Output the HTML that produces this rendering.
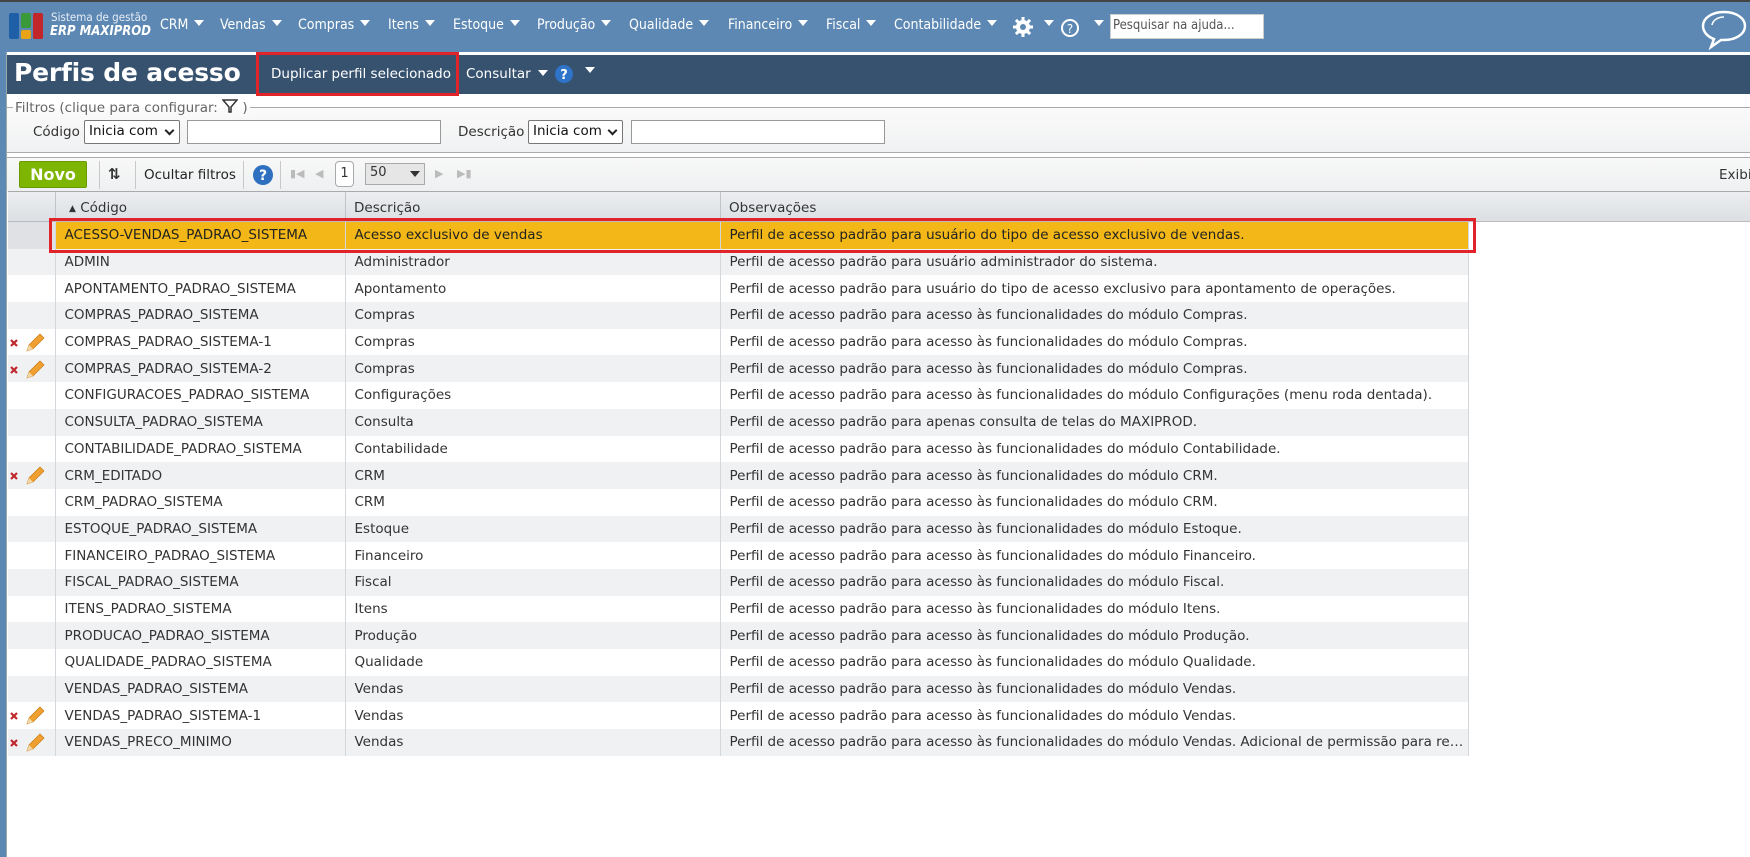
<!DOCTYPE html>
<html><head><meta charset="utf-8"><style>
*{margin:0;padding:0;box-sizing:border-box}
body{width:1750px;height:857px;overflow:hidden;background:#fff;font-family:"DejaVu Sans",Verdana,sans-serif;font-size:13px;color:#333;position:relative}
.abs{position:absolute}
#nav{left:0;top:0;width:1750px;height:52px;background:#5c88b3;border-top:2px solid #444}
.mi{position:absolute;top:15px;color:#fff;font-family:"DejaVu Sans Condensed","Liberation Sans",sans-serif;font-size:14px;white-space:nowrap}
.mi:after{content:"";display:inline-block;margin-left:6px;border-left:5px solid transparent;border-right:5px solid transparent;border-top:6px solid #fff;vertical-align:3px}
#leftbar{left:0;top:52px;width:7px;height:805px;background:#5c88b3;border-right:1px solid #9aa}
#title{left:7px;top:55px;width:1743px;height:39px;background:#36526f}
#filters{left:7px;top:107px;width:1743px;height:46px;border-top:1px solid #aaa;border-bottom:1px solid #aaa;background:linear-gradient(#fafafa,#f0f1f2)}
#tb{left:7px;top:157px;width:1743px;height:34px;border-top:1px solid #aaa;background:linear-gradient(#f8f8f8,#eef0f1)}
#hdr{left:8px;top:191px;width:1742px;height:31px;border-top:1px solid #aaa;border-bottom:1px solid #bbb;background:linear-gradient(#eceef0,#dcdfe3)}
.sep{position:absolute;top:3px;width:1px;height:28px;background:#c8c8c8}
table{position:absolute;left:8px;top:222px;border-collapse:collapse;width:1461px;table-layout:fixed}
td{height:26.7px;padding:0 0 0 9px;white-space:nowrap;overflow:hidden;text-overflow:ellipsis;border-right:1px solid #d4d7db;font-size:13.5px;color:#333}
td.s{width:47px;padding:0}
td.c{width:290px}
td.d{width:375px}
tr:nth-child(even) td{background:#f0f1f3}
tr.sel td{background:#f3b817;color:#222}
tr.sel td.s{background:#dfe1e4}
.inp{position:absolute;height:24px;background:#fff;border:1px solid #999}
.selb{position:absolute;height:24px;background:#fff;border:1px solid #777;border-radius:2px;font-size:13.5px;padding:2px 4px;color:#111;white-space:nowrap}
.selb b{position:absolute;right:6px;top:6px;width:7px;height:7px;border-right:2px solid #222;border-bottom:2px solid #222;transform:rotate(45deg)}
</style></head><body>
<div id="nav" class="abs">
  <svg class="abs" style="left:9px;top:11px" width="36" height="26"><rect x="0" y="0" width="10" height="26" rx="2" fill="#1f5fa8"/><rect x="12" y="0" width="10" height="15" rx="2" fill="#3a9a3a"/><rect x="12" y="17" width="10" height="9" rx="2" fill="#e8a317"/><rect x="24" y="0" width="10" height="26" rx="2" fill="#c2262a"/></svg>
  <div class="abs" style="left:51px;top:8px;color:#e8eef5;font-family:'DejaVu Sans Condensed',sans-serif;font-size:11.5px">Sistema de gestão</div>
  <div class="abs" style="left:50px;top:22px;color:#fff;font-family:'DejaVu Sans Condensed',sans-serif;font-size:13px;font-style:italic;font-weight:bold">ERP MAXIPROD</div>
  <div class="mi" style="left:160px">CRM</div>
  <div class="mi" style="left:220px">Vendas</div>
  <div class="mi" style="left:298px">Compras</div>
  <div class="mi" style="left:388px">Itens</div>
  <div class="mi" style="left:453px">Estoque</div>
  <div class="mi" style="left:537px">Produção</div>
  <div class="mi" style="left:629px">Qualidade</div>
  <div class="mi" style="left:728px">Financeiro</div>
  <div class="mi" style="left:826px">Fiscal</div>
  <div class="mi" style="left:894px">Contabilidade</div>
  <svg class="abs" style="left:1012px;top:14px" width="22" height="22" viewBox="0 0 22 22"><g fill="#fff"><circle cx="11" cy="11" r="7"/><rect x="9.5" y="1" width="3" height="20"/><rect x="1" y="9.5" width="20" height="3"/><rect x="9.5" y="1" width="3" height="20" transform="rotate(45 11 11)"/><rect x="9.5" y="1" width="3" height="20" transform="rotate(-45 11 11)"/></g><circle cx="11" cy="11" r="3" fill="#5c88b3"/></svg>
  <div class="mi" style="left:1038px;top:15px"></div>
  <svg class="abs" style="left:1060px;top:16px" width="20" height="20"><circle cx="10" cy="10" r="8" fill="none" stroke="#fff" stroke-width="2"/><text x="10" y="15" text-anchor="middle" fill="#fff" font-size="12" font-family="DejaVu Sans">?</text></svg>
  <div class="mi" style="left:1088px;top:15px"></div>
  <div class="abs" style="left:1110px;top:12px;width:154px;height:25px;background:#fff;border:1px solid #ccc;font-family:'DejaVu Sans Condensed',sans-serif;font-size:13px;color:#555;padding:3px 2px">Pesquisar na ajuda...</div>
  <svg class="abs" style="left:1700px;top:6px" width="48" height="42" viewBox="0 0 48 42"><path d="M24 4C12 4 3 10 3 18c0 6 5 11 11 13l-3 8 10-7c1 0 2 0 3 0 12 0 21-6 21-14S36 4 24 4z" fill="none" stroke="#fff" stroke-width="2.5"/><path d="M12 17c1-5 6-8 12-8" fill="none" stroke="#fff" stroke-width="1.5"/></svg>
</div>
<div id="leftbar" class="abs"></div>
<div id="title" class="abs">
  <div class="abs" style="left:7px;top:3px;color:#fff;font-size:25px;font-weight:bold;font-family:'DejaVu Sans',sans-serif;letter-spacing:-0.2px">Perfis de acesso</div>
  <div class="abs" style="left:264px;top:11px;color:#fff;font-size:13.5px">Duplicar perfil selecionado</div>
  <div class="abs" style="left:459px;top:11px;color:#fff;font-size:13.5px">Consultar</div>
  <div class="abs" style="left:531px;top:15px;border-left:5px solid transparent;border-right:5px solid transparent;border-top:6px solid #fff"></div>
  <svg class="abs" style="left:547px;top:9px" width="20" height="20"><circle cx="10" cy="10" r="9" fill="#2f74c8"/><text x="10" y="15" text-anchor="middle" fill="#fff" font-size="13" font-weight="bold" font-family="DejaVu Sans">?</text></svg>
  <div class="abs" style="left:578px;top:12px;border-left:5px solid transparent;border-right:5px solid transparent;border-top:6px solid #fff"></div>
</div>
<div class="abs" style="left:256px;top:52px;width:203px;height:44px;border:3px solid #e0242a"></div>
<div id="filters" class="abs"></div>
<div class="abs" style="left:13px;top:99px;padding:0 2px;font-size:13.5px;color:#666;background:linear-gradient(#fff 50%,#fafafa 50%)">Filtros (clique para configurar: <svg width="16" height="14" style="vertical-align:-1px"><path d="M1 1h14L9 8v5L7 13V8z" fill="none" stroke="#333" stroke-width="1.5"/></svg> )</div>
<div class="abs" style="left:33px;top:124px;font-size:13.5px">Código</div>
<div class="selb" style="left:84px;top:120px;width:96px">Inicia com<b></b></div>
<div class="inp" style="left:187px;top:120px;width:254px"></div>
<div class="abs" style="left:458px;top:124px;font-size:13.5px">Descrição</div>
<div class="selb" style="left:528px;top:120px;width:95px">Inicia com<b></b></div>
<div class="inp" style="left:631px;top:120px;width:254px"></div>
<div id="tb" class="abs">
  <div class="abs" style="left:12px;top:3px;width:68px;height:27px;background:#7db500;border:1px solid #6a9a00;border-radius:2px;color:#fff;font-weight:bold;font-size:16px;text-align:center;line-height:25px">Novo</div>
  <div class="sep" style="left:92px"></div>
  <div class="abs" style="left:101px;top:7px;font-size:15px;font-weight:bold;color:#333">&#8645;</div>
  <div class="sep" style="left:128px"></div>
  <div class="abs" style="left:137px;top:9px;font-size:13.5px;color:#222">Ocultar filtros</div>
  <div class="sep" style="left:236px"></div>
  <svg class="abs" style="left:245px;top:6px" width="22" height="22"><circle cx="11" cy="11" r="10" fill="#2f6fc0"/><text x="11" y="16" text-anchor="middle" fill="#fff" font-size="14" font-weight="bold" font-family="DejaVu Sans">?</text></svg>
  <div class="sep" style="left:273px"></div>
  <div class="abs" style="left:283px;top:9px;color:#bbb;font-size:11px">&#9646;&#9664;</div>
  <div class="abs" style="left:308px;top:9px;color:#bbb;font-size:11px">&#9664;</div>
  <div class="abs" style="left:328px;top:3px;width:19px;height:26px;background:#fff;border:1px solid #aaa;border-radius:4px;text-align:center;line-height:24px;font-size:13px">1</div>
  <div class="abs" style="left:358px;top:5px;width:60px;height:22px;background:#e6e6e6;border:1px solid #aaa;font-size:13px;padding:1px 4px">50</div>
  <div class="abs" style="left:403px;top:13px;border-left:5px solid transparent;border-right:5px solid transparent;border-top:6px solid #333"></div>
  <div class="abs" style="left:428px;top:9px;color:#bbb;font-size:11px">&#9654;</div>
  <div class="abs" style="left:450px;top:9px;color:#bbb;font-size:11px">&#9654;&#9646;</div>
  <div class="abs" style="left:1712px;top:9px;font-size:13.5px;color:#333">Exibi</div>
</div>
<div id="hdr" class="abs">
  <div class="abs" style="left:47px;top:0;width:1px;height:30px;background:#c0c4c8"></div>
  <div class="abs" style="left:337px;top:0;width:1px;height:30px;background:#c0c4c8"></div>
  <div class="abs" style="left:712px;top:0;width:1px;height:30px;background:#c0c4c8"></div>
  <div class="abs" style="left:61px;top:8px;font-size:13.5px"><span style="font-size:9px;vertical-align:1px">&#9650;</span> Código</div>
  <div class="abs" style="left:346px;top:8px;font-size:13.5px">Descrição</div>
  <div class="abs" style="left:721px;top:8px;font-size:13.5px">Observações</div>
</div>
<table>
<tr class="sel"><td class="s"></td><td class="c">ACESSO-VENDAS_PADRAO_SISTEMA</td><td class="d">Acesso exclusivo de vendas</td><td>Perfil de acesso padrão para usuário do tipo de acesso exclusivo de vendas.</td></tr>
<tr><td class="s"></td><td class="c">ADMIN</td><td class="d">Administrador</td><td>Perfil de acesso padrão para usuário administrador do sistema.</td></tr>
<tr><td class="s"></td><td class="c">APONTAMENTO_PADRAO_SISTEMA</td><td class="d">Apontamento</td><td>Perfil de acesso padrão para usuário do tipo de acesso exclusivo para apontamento de operações.</td></tr>
<tr><td class="s"></td><td class="c">COMPRAS_PADRAO_SISTEMA</td><td class="d">Compras</td><td>Perfil de acesso padrão para acesso às funcionalidades do módulo Compras.</td></tr>
<tr><td class="s"></td><td class="c">COMPRAS_PADRAO_SISTEMA-1</td><td class="d">Compras</td><td>Perfil de acesso padrão para acesso às funcionalidades do módulo Compras.</td></tr>
<tr><td class="s"></td><td class="c">COMPRAS_PADRAO_SISTEMA-2</td><td class="d">Compras</td><td>Perfil de acesso padrão para acesso às funcionalidades do módulo Compras.</td></tr>
<tr><td class="s"></td><td class="c">CONFIGURACOES_PADRAO_SISTEMA</td><td class="d">Configurações</td><td>Perfil de acesso padrão para acesso às funcionalidades do módulo Configurações (menu roda dentada).</td></tr>
<tr><td class="s"></td><td class="c">CONSULTA_PADRAO_SISTEMA</td><td class="d">Consulta</td><td>Perfil de acesso padrão para apenas consulta de telas do MAXIPROD.</td></tr>
<tr><td class="s"></td><td class="c">CONTABILIDADE_PADRAO_SISTEMA</td><td class="d">Contabilidade</td><td>Perfil de acesso padrão para acesso às funcionalidades do módulo Contabilidade.</td></tr>
<tr><td class="s"></td><td class="c">CRM_EDITADO</td><td class="d">CRM</td><td>Perfil de acesso padrão para acesso às funcionalidades do módulo CRM.</td></tr>
<tr><td class="s"></td><td class="c">CRM_PADRAO_SISTEMA</td><td class="d">CRM</td><td>Perfil de acesso padrão para acesso às funcionalidades do módulo CRM.</td></tr>
<tr><td class="s"></td><td class="c">ESTOQUE_PADRAO_SISTEMA</td><td class="d">Estoque</td><td>Perfil de acesso padrão para acesso às funcionalidades do módulo Estoque.</td></tr>
<tr><td class="s"></td><td class="c">FINANCEIRO_PADRAO_SISTEMA</td><td class="d">Financeiro</td><td>Perfil de acesso padrão para acesso às funcionalidades do módulo Financeiro.</td></tr>
<tr><td class="s"></td><td class="c">FISCAL_PADRAO_SISTEMA</td><td class="d">Fiscal</td><td>Perfil de acesso padrão para acesso às funcionalidades do módulo Fiscal.</td></tr>
<tr><td class="s"></td><td class="c">ITENS_PADRAO_SISTEMA</td><td class="d">Itens</td><td>Perfil de acesso padrão para acesso às funcionalidades do módulo Itens.</td></tr>
<tr><td class="s"></td><td class="c">PRODUCAO_PADRAO_SISTEMA</td><td class="d">Produção</td><td>Perfil de acesso padrão para acesso às funcionalidades do módulo Produção.</td></tr>
<tr><td class="s"></td><td class="c">QUALIDADE_PADRAO_SISTEMA</td><td class="d">Qualidade</td><td>Perfil de acesso padrão para acesso às funcionalidades do módulo Qualidade.</td></tr>
<tr><td class="s"></td><td class="c">VENDAS_PADRAO_SISTEMA</td><td class="d">Vendas</td><td>Perfil de acesso padrão para acesso às funcionalidades do módulo Vendas.</td></tr>
<tr><td class="s"></td><td class="c">VENDAS_PADRAO_SISTEMA-1</td><td class="d">Vendas</td><td>Perfil de acesso padrão para acesso às funcionalidades do módulo Vendas.</td></tr>
<tr><td class="s"></td><td class="c">VENDAS_PRECO_MINIMO</td><td class="d">Vendas</td><td>Perfil de acesso padrão para acesso às funcionalidades do módulo Vendas. Adicional de permissão para rea...</td></tr>
</table>
<svg class="abs" style="left:0;top:0;pointer-events:none" width="1750" height="857">
<defs><g id="ed"><path d="M3 -4l6 6M9 -4l-6 6" stroke="#c0272d" stroke-width="2.2"/><path d="M19 7l2-6 11-11 4 4-11 11z" fill="#f0a030" stroke="#c77a10" stroke-width="0.7"/><path d="M19 7l2-6 4 4z" fill="#f3d8a8"/></g></defs>
<use href="#ed" x="8" y="344"/>
<use href="#ed" x="8" y="371"/>
<use href="#ed" x="8" y="477"/>
<use href="#ed" x="8" y="717"/>
<use href="#ed" x="8" y="744"/>
</svg>
<div class="abs" style="left:49px;top:218px;width:1427px;height:35px;border:3px solid #e0242a"></div>
</body></html>
